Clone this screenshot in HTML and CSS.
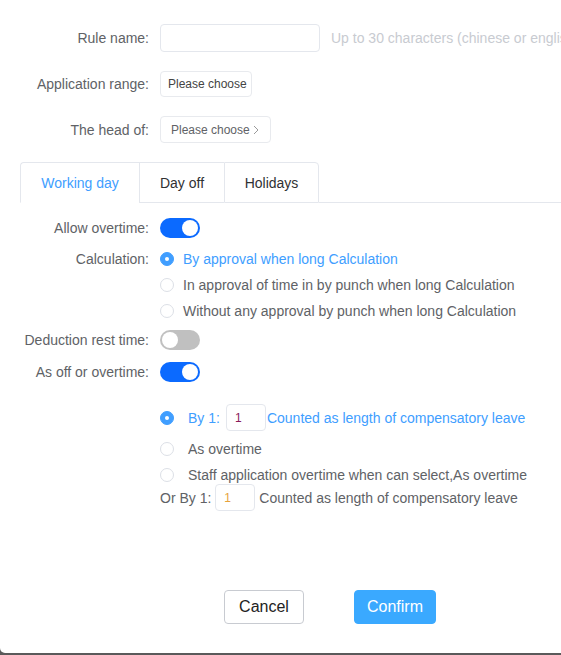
FILE: index.html
```html
<!DOCTYPE html>
<html>
<head>
<meta charset="utf-8">
<link rel="stylesheet" href="styles.css">
</head>
<body>
<div class="modal">
  <div class="top">
    <div class="row r-name">
      <label class="lbl">Rule name:</label>
      <div class="text-input"></div>
      <span class="hint">Up to 30 characters (chinese or english)</span>
    </div>
    <div class="row r-range">
      <label class="lbl">Application range:</label>
      <button class="choose">Please choose</button>
    </div>
    <div class="row r-head">
      <label class="lbl">The head of:</label>
      <button class="choose choose-arrow">Please choose<svg class="chev" width="6" height="10" viewBox="0 0 6 10"><path d="M1 1 L5 5 L1 9" fill="none" stroke="#9a9a9a" stroke-width="1"/></svg></button>
    </div>
  </div>

  <div class="tabs">
    <div class="tab active">Working day</div>
    <div class="tab">Day off</div>
    <div class="tab">Holidays</div>
    <div class="tab-fill"></div>
  </div>

  <div class="pane">
    <div class="row r-allow">
      <label class="lbl">Allow overtime:</label>
      <span class="switch on"><span class="knob"></span></span>
    </div>
    <div class="row r-calc">
      <label class="lbl">Calculation:</label>
      <span class="radio checked"></span><span class="opt sel">By approval when long Calculation</span>
    </div>
    <div class="row r-radio">
      <span class="lbl"></span>
      <span class="radio"></span><span class="opt">In approval of time in by punch when long Calculation</span>
    </div>
    <div class="row r-radio">
      <span class="lbl"></span>
      <span class="radio"></span><span class="opt">Without any approval by punch when long Calculation</span>
    </div>
    <div class="row r-deduct">
      <label class="lbl">Deduction rest time:</label>
      <span class="switch off"><span class="knob"></span></span>
    </div>
    <div class="row r-asoff">
      <label class="lbl">As off or overtime:</label>
      <span class="switch on"><span class="knob"></span></span>
    </div>

    <div class="sub">
      <div class="srow s-by">
        <span class="radio checked"></span>
        <span class="sopt sel">By 1:</span>
        <span class="num num-a">1</span>
        <span class="sel after-a">Counted as length of compensatory leave</span>
      </div>
      <div class="srow s-ot">
        <span class="radio"></span>
        <span class="sopt">As overtime</span>
      </div>
      <div class="srow s-staff">
        <span class="radio"></span>
        <span class="sopt">Staff application overtime when can select,As overtime</span>
      </div>
      <div class="srow s-or">
        <span class="orby">Or By 1:</span>
        <span class="num num-b">1</span>
        <span class="after-b">Counted as length of compensatory leave</span>
      </div>
    </div>
  </div>

  <div class="footer">
    <button class="btn cancel">Cancel</button>
    <button class="btn confirm">Confirm</button>
  </div>
</div>
</body>
</html>
```
FILE: styles.css
```css
html, body {
  margin: 0;
  padding: 0;
}
body {
  background: #5a5a5a;
  width: 561px;
  height: 655px;
  overflow: hidden;
  font-family: "Liberation Sans", Arial, sans-serif;
  font-size: 14px;
  color: #606266;
}
.modal {
  background: #fff;
  width: 561px;
  height: 653px;
  border-bottom-left-radius: 5px;
  overflow: hidden;
}
.top {
  padding-top: 24px;
}
.row {
  display: flex;
  align-items: center;
  white-space: nowrap;
}
.lbl {
  width: 149px;
  flex: none;
  text-align: right;
  padding-right: 11px;
  box-sizing: content-box;
  color: #606266;
  font-size: 14px;
}
.r-name { height: 28px; }
.r-range { height: 26px; margin-top: 19px; }
.r-head { height: 27px; margin-top: 19px; }

.text-input {
  flex: none;
  border: 1px solid #e4e7ed;
  border-radius: 4px;
  box-sizing: border-box;
  height: 28px;
  width: 160px;
}
.hint {
  margin-left: 11px;
  color: #c8cbd1;
  font-size: 14px;
  overflow: hidden;
}
.choose {
  font-family: "Liberation Sans", Arial, sans-serif;
  font-size: 12px;
  color: #444;
  background: #fff;
  border: 1px solid #e8eaee;
  border-radius: 4px;
  height: 26px;
  padding: 0 0 0 7px;
  margin: 0;
  text-align: left;
}
.r-range .choose { width: 92px; }
.choose-arrow {
  height: 27px;
  width: 111px;
  padding: 0 0 0 10px;
  color: #606266;
  display: flex;
  align-items: center;
}
.chev {
  margin-left: 3px;
  display: block;
}

.tabs {
  display: flex;
  margin-top: 19px;
  height: 41px;
  padding-left: 20px;
}
.tab {
  height: 41px;
  box-sizing: border-box;
  display: flex;
  align-items: center;
  justify-content: center;
  border-top: 1px solid #e4e7ed;
  border-left: 1px solid #e4e7ed;
  border-bottom: 1px solid #e4e7ed;
  color: #303133;
  font-size: 14px;
  flex: none;
}
.tab:nth-child(1) { width: 119px; border-radius: 4px 0 0 0; }
.tab:nth-child(2) { width: 85px; }
.tab:nth-child(3) { width: 95px; border-right: 1px solid #e4e7ed; border-radius: 0 4px 0 0; }
.tab.active {
  color: #409eff;
  border-bottom-color: transparent;
}
.tab-fill {
  flex: 1;
  border-bottom: 1px solid #e4e7ed;
}

.r-allow { height: 26px; margin-top: 12px; }
.r-calc { height: 26px; margin-top: 5px; }
.r-radio { height: 26px; }
.r-deduct { height: 26px; margin-top: 3px; }
.r-asoff { height: 26px; margin-top: 6px; }

.switch {
  position: relative;
  width: 40px;
  height: 20px;
  border-radius: 10px;
  flex: none;
  display: inline-block;
}
.switch.on { background: #0b6aff; }
.switch.off { background: #c0c0c0; }
.knob {
  position: absolute;
  top: 2px;
  width: 16px;
  height: 16px;
  border-radius: 50%;
  background: #fff;
}
.switch.on .knob { right: 2px; }
.switch.off .knob { left: 2px; }

.radio {
  width: 14px;
  height: 14px;
  box-sizing: border-box;
  border: 1px solid #dcdfe6;
  border-radius: 50%;
  background: #fff;
  flex: none;
  position: relative;
}
.radio.checked {
  background: #409eff;
  border-color: #409eff;
}
.radio.checked::after {
  content: "";
  position: absolute;
  width: 4px;
  height: 4px;
  border-radius: 50%;
  background: #fff;
  left: 4px;
  top: 4px;
}
.opt {
  margin-left: 9px;
  color: #606266;
}
.opt.sel { color: #409eff; }
.sel { color: #409eff; }

.sub {
  padding-left: 160px;
  margin-top: 19px;
}
.srow {
  display: flex;
  align-items: center;
  white-space: nowrap;
}
.s-by { height: 27px; }
.s-ot { height: 26px; margin-top: 5px; }
.s-staff { height: 26px; }
.s-or { height: 27px; margin-top: -4px; }
.sopt {
  margin-left: 14px;
  color: #606266;
}
.sopt.sel { color: #409eff; }
.num {
  flex: none;
  width: 40px;
  height: 27px;
  box-sizing: border-box;
  border: 1px solid #e4e7ed;
  border-radius: 4px;
  display: flex;
  align-items: center;
  padding-left: 8px;
  font-size: 12px;
}
.num-a { margin-left: 6px; color: #8a1a5a; }
.num-b { margin-left: 4px; color: #e6a23c; }
.after-a { margin-left: 1px; }
.after-b { margin-left: 4px; color: #606266; }
.orby { color: #606266; }

.footer {
  display: flex;
  padding-left: 224px;
  margin-top: 79px;
  gap: 50px;
}
.btn {
  font-family: "Liberation Sans", Arial, sans-serif;
  font-size: 16px;
  height: 34px;
  border-radius: 4px;
  margin: 0;
  padding: 0;
}
.cancel {
  width: 80px;
  background: #fff;
  border: 1px solid #c8cbd1;
  color: #222;
}
.confirm {
  width: 82px;
  background: #3aa9ff;
  border: 1px solid #3aa9ff;
  color: #fff;
}
```
